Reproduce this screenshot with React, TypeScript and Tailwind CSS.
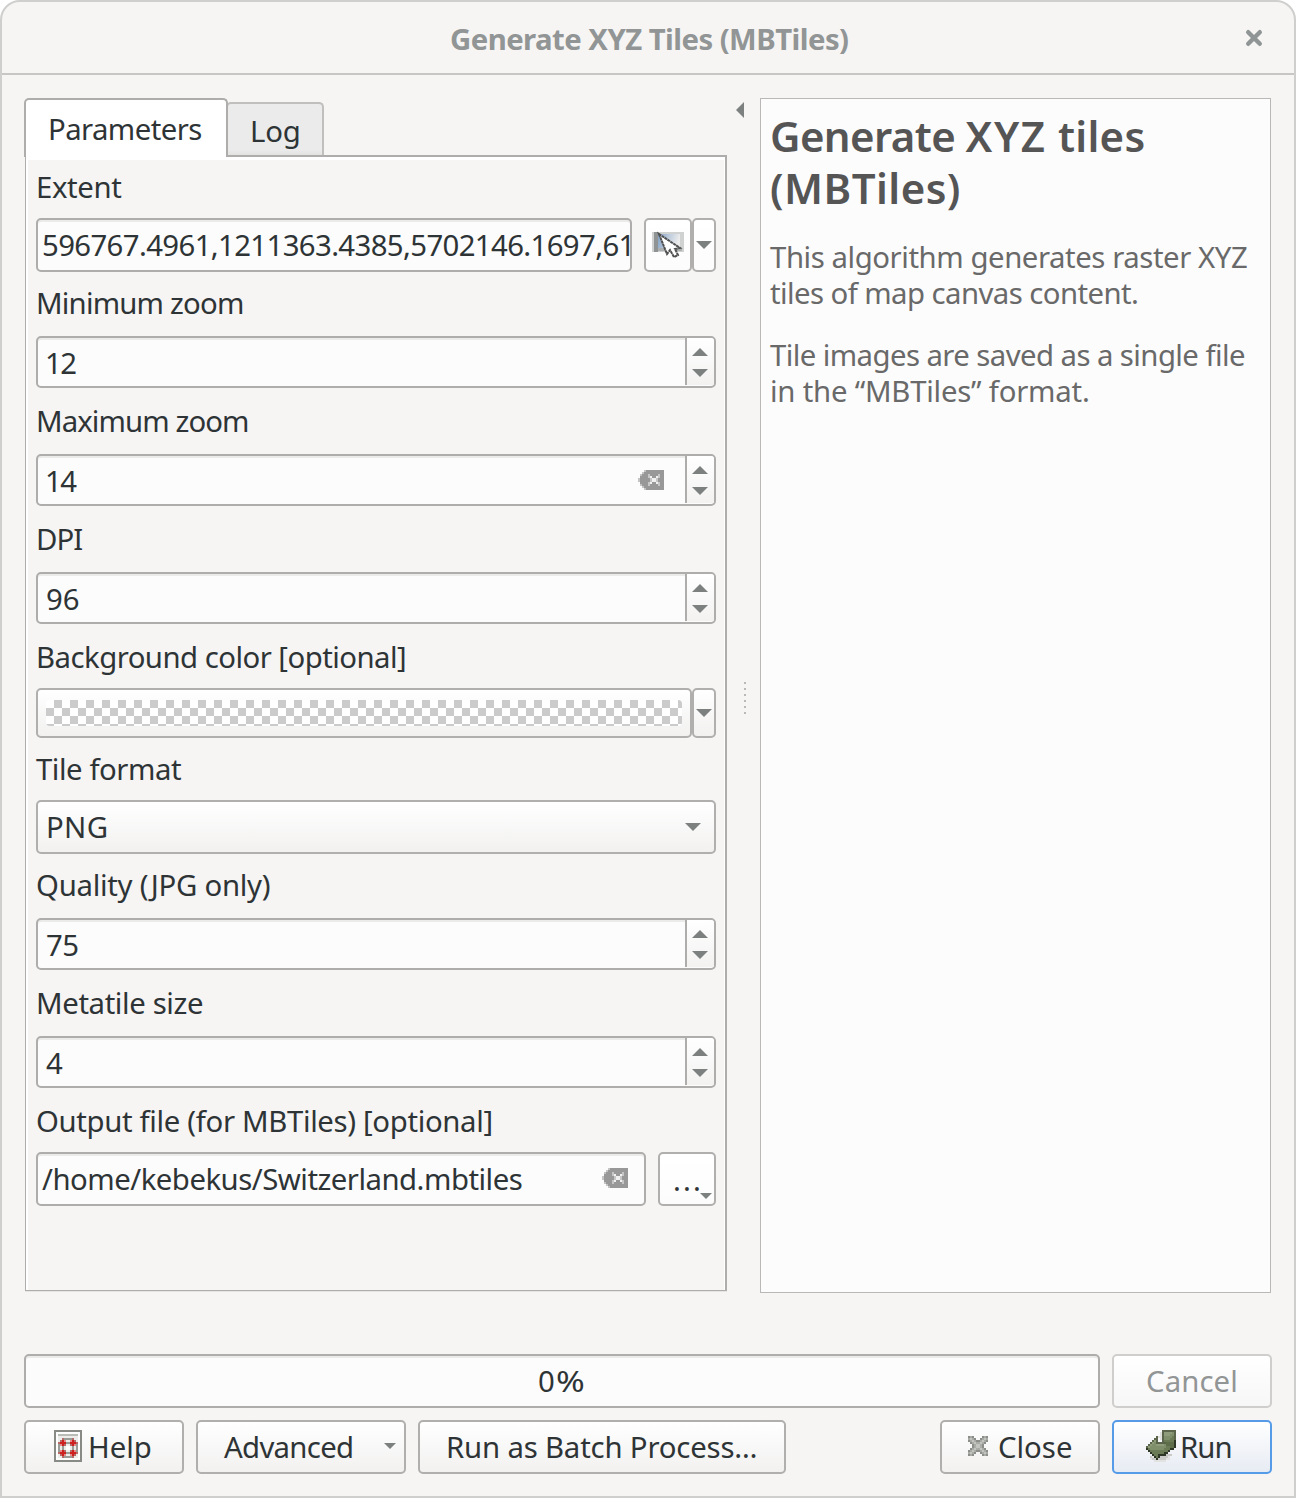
import type { ReactNode } from "react";

function Arrow({ dir = "down", className = "" }: { dir?: "up" | "down"; className?: string }) {
  return (
    <svg viewBox="0 0 16 8" className={`block shrink-0 ${className}`} fill="#7c8180">
      <path d={dir === "down" ? "M0 0H16L8 8Z" : "M0 8H16L8 0Z"} />
    </svg>
  );
}

function PixelIcon({
  rows,
  palette,
  className,
}: {
  rows: string[];
  palette: Record<string, string>;
  className: string;
}) {
  return (
    <svg
      viewBox={`0 0 ${rows[0].length} ${rows.length}`}
      shapeRendering="crispEdges"
      className={`block shrink-0 ${className}`}
    >
      {rows.flatMap((row, y) =>
        row.split("").map((c, x) =>
          palette[c] ? <rect key={`${x}-${y}`} x={x} y={y} width="1" height="1" fill={palette[c]} /> : null,
        ),
      )}
    </svg>
  );
}

function ClearIcon() {
  return (
    <PixelIcon
      className="h-[20px] w-[26px]"
      palette={{ l: "#c4c4c4", g: "#989898", w: "#f0f0f0", m: "#c6c6c6" }}
      rows={[
        "...lggggggggg",
        "..lgggggggggg",
        ".lgggmggggmgg",
        ".ggggmwggwmgg",
        "lgggggmwwmggg",
        "lgggggmwwmggg",
        ".ggggmwggwmgg",
        ".lgggmggggmgg",
        "..lgggggggggg",
        "...lggggggggg",
      ]}
    />
  );
}

function RunIcon() {
  return (
    <PixelIcon
      className="h-[32px] w-[30px]"
      palette={{
        d: "#5a654b",
        k: "#2e3626",
        a: "#8e9c7b",
        b: "#7f8f6b",
        c: "#6b7b56",
        e: "#5e6e4a",
        s: "#c9cac8",
        t: "#e2e2e1",
      }}
      rows={[
        "........ddddddd",
        ".......tdaaaabd",
        ".......tdaaabbd",
        ".....dttdbbbbcd",
        "....dd.tdbbbccd",
        "...dad..dccccck",
        "..dabdddddeeeek",
        ".dabbaaaabeeeek",
        "dabbbbbbbbcceek",
        "kcbbbbbbbccckk.",
        ".kccccccccck...",
        "..kcccccckk....",
        "...kcckkkksss..",
        "..stkcksssst...",
        "..tssksssstt...",
        "....tttttt.....",
      ]}
    />
  );
}

function CloseIcon() {
  return (
    <PixelIcon
      className="h-[20px] w-[20px]"
      palette={{ g: "#8c8e89", l: "#c3c4c0", m: "#a9aba6" }}
      rows={[
        "gmg....gmg",
        "mlmg..gmlm",
        "gmlmggmlmg",
        ".gmlmmlmg.",
        "..gmllmg..",
        "..gmllmg..",
        ".gmlmmlmg.",
        "gmlmggmlmg",
        "mlmg..gmlm",
        "gmg....gmg",
      ]}
    />
  );
}

function HelpIcon() {
  return (
    <PixelIcon
      className="h-[32px] w-[28px]"
      palette={{
        b: "#888a85",
        w: "#fefefe",
        e: "#ecedeb",
        h: "#babdb6",
        g: "#9a9c97",
        r: "#cf2020",
        p: "#e58a8a",
        s: "#b56a67",
      }}
      rows={[
        "bbbbbbbbbbbbbb",
        "bwwwwwwwwwwwwb",
        "bwhhhhhhhhhhwb",
        "bweeeeeeeeeewb",
        "bweesggggseewb",
        "bwesrpeeprsewb",
        "bwsrrrggrrrswb",
        "bwgprseesrpgwb",
        "bwgegewwegegwb",
        "bwgegewwegegwb",
        "bwgprseesrpgwb",
        "bwsrrrggrrrswb",
        "bwesrpeeprsewb",
        "bweesggggseewb",
        "bwwwwwwwwwwwwb",
        "bbbbbbbbbbbbbb",
      ]}
    />
  );
}

function ExtentIcon() {
  return (
    <svg viewBox="0 0 32 28" className="block h-[28px] w-[32px] shrink-0">
      <defs>
        <linearGradient id="canvas" x1="0" x2="1" y1="0" y2="0.2">
          <stop offset="0" stopColor="#7f9fc4" />
          <stop offset="0.5" stopColor="#bccbdc" />
          <stop offset="1" stopColor="#ececec" />
        </linearGradient>
      </defs>
      <rect x="0" y="2" width="32" height="20" fill="#d0d2d2" />
      <rect x="2" y="2" width="4" height="20" fill="#8f9394" />
      <rect x="6" y="4" width="22" height="14" fill="url(#canvas)" />
      <rect x="6" y="18" width="24" height="3" fill="#adb0b0" />
      <path d="M7 4L15 24L18 20L22 27L26 25L23 19L28 18Z" fill="#fff" />
      <path
        d="M7 4L15 24L18 20L22 27L26 25L23 19L28 18Z"
        fill="none"
        stroke="#505050"
        strokeWidth="2"
        strokeDasharray="3 0.5"
      />
    </svg>
  );
}

function Label({ children, className }: { children: ReactNode; className: string }) {
  return <div className={`flex shrink-0 items-center whitespace-nowrap ${className}`}>{children}</div>;
}

const field =
  "flex shrink-0 overflow-hidden whitespace-nowrap rounded-[5px] border-2 border-[#aeadab] bg-[#fcfcfc] shadow-[inset_0_2px_0_#ebebea]";
const button =
  "flex shrink-0 overflow-hidden whitespace-nowrap rounded-[5px] border-2 border-[#b0afad] bg-linear-to-b from-white to-[#f2f1f0]";

function SpinBox({ value, tracking = "", clearable = false }: { value: string; tracking?: string; clearable?: boolean }) {
  return (
    <div className={`${field} h-[52px] w-[680px]`}>
      <div className={`flex-1 pl-[8px] leading-[51px] ${tracking}`}>{value}</div>
      {clearable && (
        <div className="mt-[14px] mr-[21px]">
          <ClearIcon />
        </div>
      )}
      <div className="flex h-[47px] w-[29px] flex-col gap-[13px] border-l-2 border-[#aeadab] bg-linear-to-b from-white to-[#f3f2f1] pt-[10px] pl-[5px]">
        <Arrow dir="up" className="h-[8px] w-[16px]" />
        <Arrow className="h-[8px] w-[16px]" />
      </div>
    </div>
  );
}

function ParametersPanel() {
  return (
    <div className="ml-px flex h-[1136px] flex-col border-t-2 border-r-2 border-b border-l border-[#aeadab] shadow-[0_1px_0_#e6e5e3]">
      <div className="flex flex-1 flex-col border-t-3 border-r border-l-2 border-white pl-[8px]">
        <Label className="h-[58px] pb-[3px] tracking-[-0.35px]">Extent</Label>
        <div className="flex">
          <div className={`${field} mr-[12px] h-[54px] w-[596px] pl-[4px] leading-[51px] tracking-[-0.62px]`}>
            596767.4961,1211363.4385,5702146.1697,61
          </div>
          <div className={`${button} h-[54px] w-[48px] to-[#fcfcfc] pt-[10px] pl-[6px]`}>
            <ExtentIcon />
          </div>
          <div className={`${button} h-[54px] w-[24px] to-[#fcfcfc] pt-[21px] pl-[2px]`}>
            <Arrow className="h-[8px] w-[16px]" />
          </div>
        </div>
        <Label className="h-[64px] tracking-[-0.8px]">Minimum zoom</Label>
        <SpinBox value="12" tracking="tracking-[-1.6px] -ml-px" />
        <Label className="h-[66px] pt-[2px] tracking-[-0.9px]">Maximum zoom</Label>
        <SpinBox value="14" tracking="tracking-[-1.6px] -ml-px" clearable />
        <Label className="h-[66px] pt-[2px] tracking-[-0.9px]">DPI</Label>
        <SpinBox value="96" />
        <Label className="h-[64px] pt-[4px] tracking-[-0.53px]">Background color [optional]</Label>
        <div className="flex">
          <div className={`${button} h-[50px] w-[656px] pt-[10px] pl-[8px]`}>
            <div className="h-[26px] w-[636px] rounded-[4px] bg-[conic-gradient(#fff_25%,#cbcbcb_0_50%,#fff_0_75%,#cbcbcb_0)] bg-size-[16px_16px] bg-position-[8px_0px]" />
          </div>
          <div className={`${button} h-[50px] w-[24px] pt-[19px] pl-[2px]`}>
            <Arrow className="h-[8px] w-[16px]" />
          </div>
        </div>
        <Label className="h-[62px] pt-[2px] tracking-[-0.44px]">Tile format</Label>
        <div className={`${button} h-[54px] w-[680px] justify-between pr-[13px] pl-[8px]`}>
          <span className="leading-[50px] tracking-[0.3px]">PNG</span>
          <Arrow className="mt-[21px] h-[8px] w-[16px]" />
        </div>
        <Label className="h-[64px] tracking-[-0.27px]">Quality (JPG only)</Label>
        <SpinBox value="75" tracking="tracking-[-0.6px]" />
        <Label className="h-[66px] pt-[2px] tracking-[-0.38px]">Metatile size</Label>
        <SpinBox value="4" />
        <Label className="h-[64px] pt-[4px] tracking-[-0.34px]">Output file (for MBTiles) [optional]</Label>
        <div className="flex gap-[12px]">
          <div className={`${field} h-[54px] w-[610px] justify-between pr-[16px] pl-[4px]`}>
            <span className="leading-[50px] tracking-[-0.5px]">/home/kebekus/Switzerland.mbtiles</span>
            <div className="pt-[14px]">
              <ClearIcon />
            </div>
          </div>
          <div className={`${button} h-[54px] w-[58px] to-[#fcfcfc] pl-[13px]`}>
            <span className="pt-[3px] leading-[46px] tracking-[2.1px]">...</span>
            <Arrow className="mt-[39px] -ml-[3px] h-[6px] w-[12px]" />
          </div>
        </div>
      </div>
    </div>
  );
}

function ParameterTabs() {
  return (
    <div className="w-[703px]">
      <div className="flex h-[57px] items-start">
        <div className="relative z-10 h-[59px] w-[204px] rounded-t-[5px] border-2 border-b-0 border-[#aeadab] bg-white pl-[22px] leading-[58px] tracking-[-0.58px]">
          Parameters
        </div>
        <div className="mt-[4px] -ml-[2px] h-[53px] w-[98px] rounded-t-[5px] border-2 border-b-0 border-[#c0bfbd] bg-linear-to-b from-[#ebebeb] from-90% to-[#e2e2e1] pl-[22px] leading-[54px] tracking-[-0.2px]">
          Log
        </div>
      </div>
      <ParametersPanel />
    </div>
  );
}

function HelpPanel() {
  return (
    <div className="h-[1195px] w-[511px] whitespace-nowrap border border-[#b9b8b6] bg-[#fcfcfc] pt-[11px] pl-[9px] text-[#696969]">
      <h1 className="text-[42px] leading-[52px] font-semibold text-[#555]">
        <span className="block">
          <span className="tracking-[-0.6px]">Generate </span>
          <span className="tracking-[1.6px]">XYZ</span>
          <span className="tracking-[0.3px]"> tiles</span>
        </span>
        <span className="block tracking-[0.45px]">(MBTiles)</span>
      </h1>
      <p className="mt-[25px] leading-[37px]">
        <span className="block h-[36px] tracking-[-0.43px]">This algorithm generates raster XYZ</span>
        <span className="block h-[36px] tracking-[-0.57px]">tiles of map canvas content.</span>
      </p>
      <p className="mt-[26px] leading-[37px]">
        <span className="block h-[36px] tracking-[-0.57px]">Tile images are saved as a single file</span>
        <span className="block h-[36px] tracking-[-0.22px]">in the “MBTiles” format.</span>
      </p>
    </div>
  );
}

export default function App() {
  return (
    <div className="flex h-[1498px] w-[1296px] flex-col overflow-hidden rounded-t-[20px] border-2 border-[#cfcfce] bg-[#f6f5f4] font-['Noto_Sans',sans-serif] text-[29.33px] text-[#2e3436]">
      <header className="flex h-[73px] shrink-0 justify-between border-b-2 border-[#c7c6c5] pl-[448px]">
        <span className="whitespace-nowrap leading-[75px] font-bold tracking-[-0.55px] text-[#929595]">
          Generate XYZ Tiles (MBTiles)
        </span>
        <svg viewBox="0 0 18 18" className="mt-[27px] mr-[31px] h-[18px] w-[18px]">
          <path d="M3.2 3.2L14.8 14.8M14.8 3.2L3.2 14.8" stroke="#8f9594" strokeWidth="4.4" strokeLinecap="round" />
        </svg>
      </header>

      <main className="mt-[23px] ml-[22px] flex h-[1195px] shrink-0">
        <ParameterTabs />
        <div className="flex w-[33px] flex-col pl-[9px]">
          <svg viewBox="0 0 8 16" className="mt-[4px] h-[16px] w-[8px]">
            <path d="M8 0V16L0 8Z" fill="#7c8180" />
          </svg>
          <div className="mt-[564px] ml-[8px] flex flex-col gap-[4px]">
            {[0, 1, 2, 3, 4, 5].map((i) => (
              <span key={i} className="h-[2px] w-[2px] bg-[#b9b9b8]" />
            ))}
          </div>
        </div>
        <HelpPanel />
      </main>

      <footer className="mt-[61px] ml-[22px] flex w-[1248px] flex-col gap-[12px]">
        <div className="flex gap-[12px] leading-[50px]">
          <div className={`${field} h-[54px] w-[1076px] pl-[512px]`}>
            <span className="tracking-[1.4px]">0</span>
            <span className="inline-block origin-left scale-x-118">%</span>
          </div>
          <div className="h-[54px] w-[160px] rounded-[5px] border-2 border-[#cfcecd] bg-linear-to-b from-white to-[#f8f7f7] pl-[32px] tracking-[0.1px] text-[#929595]">
            Cancel
          </div>
        </div>
        <div className="flex gap-[12px] leading-[50px]">
          <div className={`${button} h-[54px] w-[160px] gap-[6px] pl-[28px]`}>
            <div className="pt-[8px]">
              <HelpIcon />
            </div>
            Help
          </div>
          <div className={`${button} h-[54px] w-[210px] justify-between pr-[8px] pl-[26px] tracking-[-0.7px]`}>
            Advanced
            <Arrow className="mt-[21px] h-[6px] w-[12px]" />
          </div>
          <div className={`${button} h-[54px] w-[368px] pl-[26px] tracking-[-0.18px]`}>Run as Batch Process…</div>
          <div className={`${button} ml-auto h-[54px] w-[160px] gap-[10px] pl-[26px]`}>
            <div className="pt-[14px]">
              <CloseIcon />
            </div>
            Close
          </div>
          <div className="flex h-[54px] w-[160px] gap-[4px] rounded-[5px] border-2 border-[#569be8] bg-linear-to-b from-white to-[#e7ebf3] pl-[32px] tracking-[-0.9px]">
            <div className="pt-[8px]">
              <RunIcon />
            </div>
            Run
          </div>
        </div>
      </footer>
    </div>
  );
}
